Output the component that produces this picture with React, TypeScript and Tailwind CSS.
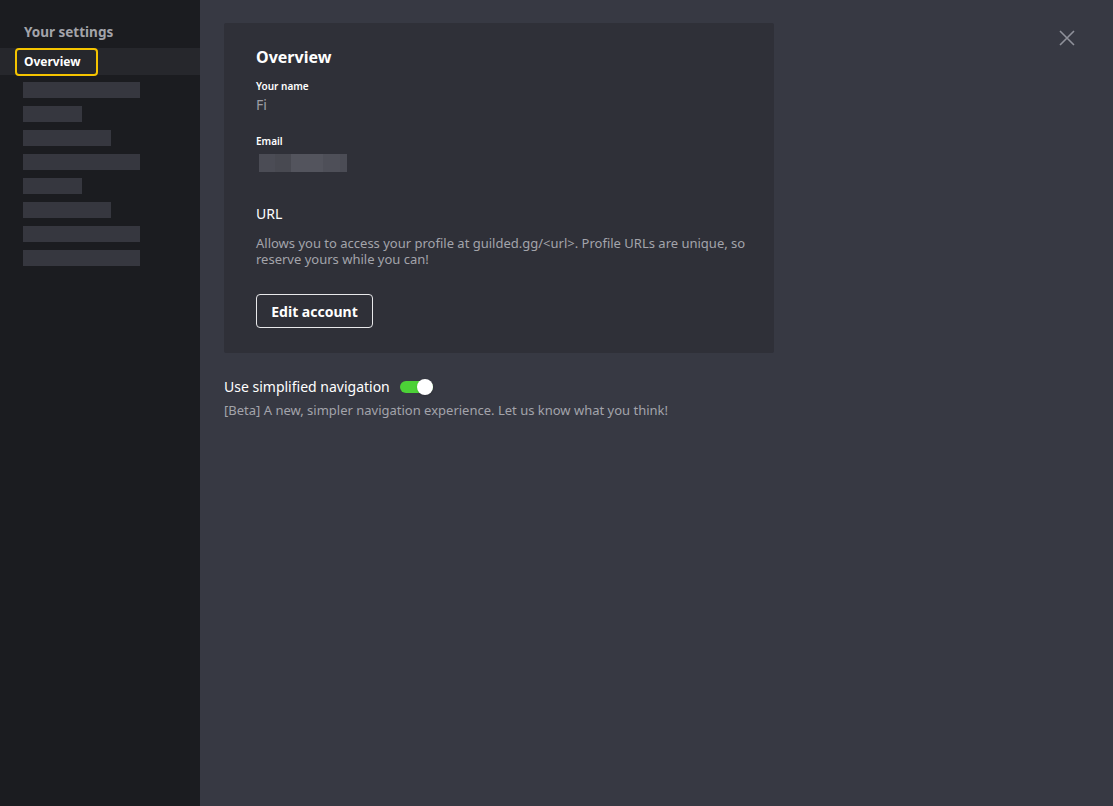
import React from "react";

const bars = [117, 59, 88, 117, 59, 88, 117, 117];

export default function App() {
  return (
    <div
      className="flex h-[806px] w-[1113px] overflow-hidden bg-[#373943] text-white"
      style={{ fontFamily: '"Noto Sans", "Open Sans", sans-serif' }}
    >
      <aside className="flex w-[200px] shrink-0 flex-col bg-[#1b1c20] pt-[22px]">
        <div className="px-6 text-[13.5px] font-bold leading-[20px] text-[#a3a4aa]">Your settings</div>
        <div className="mt-[6px] flex h-[27px] items-center bg-[#26272c] pl-[15px]">
          <div className="flex h-[28px] w-[83px] items-center rounded-[4px] border-2 border-[#f5c400] pl-[7px] text-[12px] font-bold text-white">
            Overview
          </div>
        </div>
        <div className="mt-[7px] flex flex-col gap-2 pl-[23px]">
          {bars.map((w, i) => (
            <div key={i} className="h-4 bg-[#36373f]" style={{ width: w }} />
          ))}
        </div>
      </aside>

      <main className="relative flex-1 pl-6 pt-[23px]">
        <section className="flex h-[330px] w-[550px] flex-col rounded-[2px] bg-[#2f3038] px-8 pt-[24px]">
          <h2 className="text-[16px] font-bold leading-[20px] text-white">Overview</h2>
          <div className="mt-[12px] text-[10px] font-semibold leading-[14px] text-white">Your name</div>
          <div className="mt-[3px] text-[14px] leading-[18px] text-[#9d9ea5]">Fi</div>
          <div className="mt-[20px] text-[10px] font-semibold leading-[14px] text-white">Email</div>
          <div className="ml-[3px] mt-[6px] flex h-[18px] w-[88px]">
            <div className="w-4 bg-[#4b4c55]" />
            <div className="w-4 bg-[#484951]" />
            <div className="w-8 bg-[#53545d]" />
            <div className="w-[17px] bg-[#4e4f58]" />
            <div className="w-[7px] bg-[#4b4c55]" />
          </div>
          <div className="mt-[33px] text-[14px] leading-[18px] text-white">URL</div>
          <p className="mt-[12px] w-[500px] text-[13px] leading-[16px] text-[#a3a4ab]">
            Allows you to access your profile at guilded.gg/&lt;url&gt;. Profile URLs are unique, so reserve yours while you can!
          </p>
          <button className="mt-[27px] flex h-[34px] w-[117px] items-center justify-center rounded-[4px] border border-[#e8e8ea] text-[14px] font-bold text-white">
            Edit account
          </button>
        </section>

        <div className="mt-[25px] flex items-center">
          <span className="text-[14px] leading-[18px] text-white">Use simplified navigation</span>
          <div className="relative ml-[10px] h-[12px] w-[33px] rounded-full bg-[#4cd137]">
            <div className="absolute right-0 top-1/2 h-[16px] w-[16px] -translate-y-1/2 rounded-full bg-white shadow" />
          </div>
        </div>
        <p className="mt-[6px] text-[13px] leading-[16px] text-[#a3a4ab]">
          [Beta] A new, simpler navigation experience. Let us know what you think!
        </p>

        <button className="absolute right-[38px] top-[30px] text-[#8f919a]">
          <svg width="16" height="16" viewBox="0 0 16 16" fill="none" stroke="currentColor" strokeWidth="1.6">
            <path d="M1 1 L15 15 M15 1 L1 15" />
          </svg>
        </button>
      </main>
    </div>
  );
}
